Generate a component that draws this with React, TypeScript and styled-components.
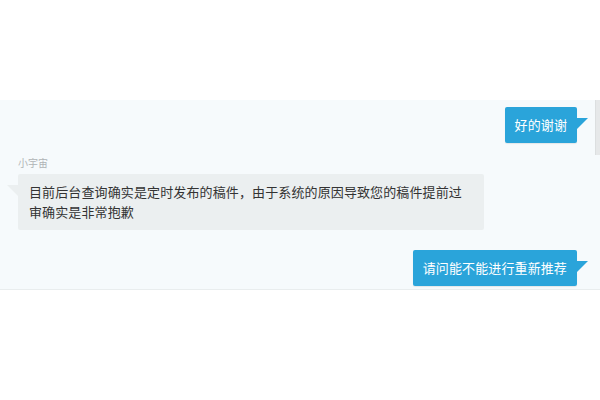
import React from 'react';
import styled, { createGlobalStyle } from 'styled-components';

const GlobalStyle = createGlobalStyle`
  body {
    margin: 0;
    background: #ffffff;
    font-family: "Noto Sans CJK SC", "Noto Sans", sans-serif;
  }
`;

const Page = styled.div`
  width: 600px;
  height: 400px;
  padding-top: 100px;
  box-sizing: border-box;
  background: #ffffff;
`;

const Panel = styled.div`
  display: flex;
  height: 189px;
  background: #f6fafc;
  border-bottom: 1px solid #e9edee;
  overflow: hidden;
`;

const Messages = styled.div`
  flex: 1;
  display: flex;
  flex-direction: column;
  padding: 7px 18px 0 18px;
`;

const ScrollTrack = styled.div`
  width: 5px;
  display: flex;
  flex-direction: column;
`;

const ScrollThumb = styled.div`
  height: 55px;
  background: #e6e8e9;
  border-left: 1px solid #dcdfe0;
`;

const Row = styled.div<{ $mine?: boolean; $gap?: number }>`
  display: flex;
  flex-direction: column;
  align-items: ${(p) => (p.$mine ? 'flex-end' : 'flex-start')};
  margin-top: ${(p) => p.$gap ?? 0}px;
`;

const Sender = styled.div`
  font-size: 10px;
  line-height: 14px;
  color: #b0b4b6;
  margin-bottom: 4px;
`;

const Bubble = styled.div<{ $mine?: boolean }>`
  position: relative;
  font-size: 13px;
  letter-spacing: 0.12px;
  line-height: 20px;
  border-radius: 2px;
  color: ${(p) => (p.$mine ? '#ffffff' : '#333333')};
  background: ${(p) => (p.$mine ? '#2aa4da' : '#ebeff0')};
  padding: ${(p) => (p.$mine ? '8px 10px' : '8px 20px 8px 11px')};
  width: ${(p) => (p.$mine ? 'auto' : '435px')};
  box-shadow: ${(p) => (p.$mine ? '0 1px 1px rgba(0,0,0,0.08)' : 'none')};

  &::after {
    content: '';
    position: absolute;
    top: 11px;
    width: 0;
    height: 0;
    border-bottom: 11px solid transparent;
    ${(p) =>
      p.$mine
        ? `right: -11px; border-left: 11px solid #2aa4da;`
        : `left: -11px; border-right: 11px solid #ebeff0;`}
  }
`;

export default function App() {
  return (
    <>
      <GlobalStyle />
      <Page>
        <Panel>
          <Messages>
            <Row $mine>
              <Bubble $mine>好的谢谢</Bubble>
            </Row>
            <Row $gap={13}>
              <Sender>小宇宙</Sender>
              <Bubble>
                目前后台查询确实是定时发布的稿件，由于系统的原因导致您的稿件提前过审确实是非常抱歉
              </Bubble>
            </Row>
            <Row $mine $gap={20}>
              <Bubble $mine>请问能不能进行重新推荐</Bubble>
            </Row>
          </Messages>
          <ScrollTrack>
            <ScrollThumb />
          </ScrollTrack>
        </Panel>
      </Page>
    </>
  );
}
